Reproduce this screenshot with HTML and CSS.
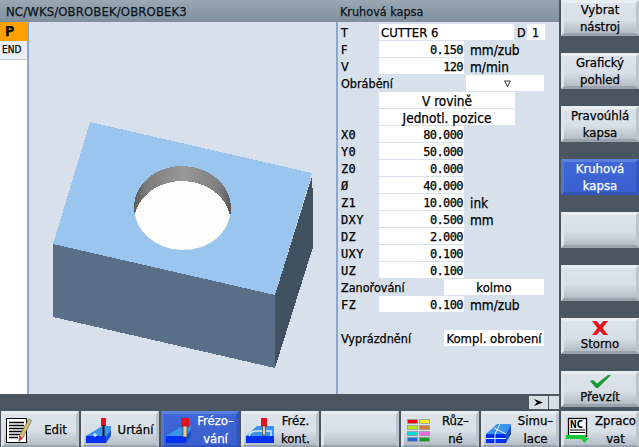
FILE: index.html
```
<!DOCTYPE html>
<html lang="cs">
<head>
<meta charset="utf-8">
<title>Kruhová kapsa</title>
<link rel="stylesheet" href="styles.css">
</head>
<body>
<div class="screen">
  <div class="upper">
    <div class="workspace">
      <header class="titlebar">
        <div class="title-path">NC/WKS/OBROBEK/OBROBEK3</div>
        <div class="title-form">Kruhová kapsa</div>
      </header>
      <div class="panels">
        <aside class="program-list">
          <div class="pl-head">P</div>
          <div class="pl-end">END</div>
        </aside>
        <main class="graphic">
          <svg class="part" viewBox="29 22 307 372" width="307" height="372">
            <defs>
              <linearGradient id="wall" x1="0" x2="1" y1="0" y2="0">
                <stop offset="0" stop-color="#5c5c5c"/>
                <stop offset="0.12" stop-color="#7c7c7c"/>
                <stop offset="0.5" stop-color="#999997"/>
                <stop offset="0.88" stop-color="#7c7c7c"/>
                <stop offset="1" stop-color="#585858"/>
              </linearGradient>
              <clipPath id="opening">
                <ellipse cx="182.5" cy="208" rx="48.5" ry="42" transform="rotate(2 182.5 208)"/>
              </clipPath>
            </defs>
            <polygon points="90,122 312,173 275,295 53,244" fill="#9ac5ef"/>
            <polygon points="53,244 275,295 275,368 53,317" fill="#5a6f87"/>
            <polygon points="275,295 312,176 313,199 313,247 275,368" fill="#415162"/>
            <ellipse cx="182.5" cy="208" rx="48.5" ry="42" transform="rotate(2 182.5 208)" fill="url(#wall)"/>
            <g clip-path="url(#opening)">
              <ellipse cx="182.5" cy="223" rx="48.5" ry="42" transform="rotate(2 182.5 223)" fill="#fdfdfb"/>
            </g>
          </svg>
        </main>
        <section class="form">
          <div class="row"><span class="lbl">T</span><span class="fld fld-tool">CUTTER 6</span><span class="lbl-d">D</span><span class="fld fld-d">1</span></div>
          <div class="row"><span class="lbl">F</span><span class="fld num">0.150</span><span class="unit">mm/zub</span></div>
          <div class="row"><span class="lbl">V</span><span class="fld num">120</span><span class="unit">m/min</span></div>
          <div class="row"><span class="lbl lbl-wide">Obrábění</span><span class="fld fld-combo"><svg class="tri" viewBox="0 0 7 7" width="7" height="7"><path d="M.5 1h6L3.5 6.5z" fill="none" stroke="#333" stroke-width="1"/></svg></span></div>
          <div class="row"><span class="lbl"></span><span class="fld fld-center">V rovině</span></div>
          <div class="row"><span class="lbl"></span><span class="fld fld-center">Jednotl. pozice</span></div>
          <div class="row"><span class="lbl mono">X0</span><span class="fld num">80.000</span></div>
          <div class="row"><span class="lbl mono">Y0</span><span class="fld num">50.000</span></div>
          <div class="row"><span class="lbl mono">Z0</span><span class="fld num">0.000</span></div>
          <div class="row"><span class="lbl mono">Ø</span><span class="fld num">40.000</span></div>
          <div class="row"><span class="lbl mono">Z1</span><span class="fld num">10.000</span><span class="unit">ink</span></div>
          <div class="row"><span class="lbl mono">DXY</span><span class="fld num">0.500</span><span class="unit">mm</span></div>
          <div class="row"><span class="lbl mono">DZ</span><span class="fld num">2.000</span></div>
          <div class="row"><span class="lbl mono">UXY</span><span class="fld num">0.100</span></div>
          <div class="row"><span class="lbl mono">UZ</span><span class="fld num">0.100</span></div>
          <div class="row"><span class="lbl lbl-mid">Zanořování</span><span class="fld fld-opt">kolmo</span></div>
          <div class="row"><span class="lbl mono">FZ</span><span class="fld num">0.100</span><span class="unit">mm/zub</span></div>
          <div class="row"></div>
          <div class="row"><span class="lbl lbl-mid">Vyprázdnění</span><span class="fld fld-opt">Kompl. obrobení</span></div>
        </section>
      </div>
      <div class="scrollbar">
        <button class="more">
          <svg viewBox="0 0 9 7" width="9" height="7"><path d="M0 0l9 3.500L0 7l3-3.500z" fill="#000"/></svg>
        </button>
        <span class="more-box"></span>
      </div>
    </div>
    <nav class="vkeys">
      <div class="key vkey">Vybrat<br>nástroj</div>
      <div class="key vkey">Grafický<br>pohled</div>
      <div class="key vkey">Pravoúhlá<br>kapsa</div>
      <div class="key vkey key-on">Kruhová<br>kapsa</div>
      <div class="key vkey"></div>
      <div class="key vkey"></div>
      <div class="key vkey key-icon">
        <svg viewBox="0 0 16 14" width="16" height="14"><path d="M0 0h4.500L8 4 11.500 0H16l-5.500 7L16 14h-4.500L8 10 4.500 14H0l5.500-7z" fill="#e8101c"/></svg>
        <span>Storno</span>
      </div>
      <div class="key vkey key-icon">
        <svg viewBox="0 0 21 13" width="21" height="13"><path d="M0 6l3-1 4 3.500L18 0h3L8 13H6z" fill="#1a9a34"/></svg>
        <span>Převzít</span>
      </div>
    </nav>
  </div>
  <footer class="hkeys">
    <div class="key hkey">
      <svg class="hicon" viewBox="0 0 30 30" width="30" height="30">
        <rect x="2.500" y="3.500" width="20" height="24" fill="#fff" stroke="#000"/>
        <path d="M5 7.500h15M5 10.500h15M5 13.500h15M5 16.500h14M5 19.500h11M5 22.500h9" stroke="#000" stroke-width="1.300"/>
        <path d="M25 4l2.500 1.500-8.500 17-4 4 .5-6z" fill="#d8c070" stroke="#555" stroke-width=".6"/>
        <path d="M15.500 21l3 2-3.500 3.500z" fill="#e01828"/>
      </svg>
      <span class="hlabel">Edit</span>
    </div>
    <div class="key hkey">
      <svg class="hicon" viewBox="0 0 30 30" width="30" height="30">
        <path d="M2 21L18 11h9v4l-5 6z" fill="#3a94ec"/>
        <rect x="2" y="21" width="20" height="7" fill="#0030f0"/>
        <path d="M22 21l5-6v6l-5 7z" fill="#1a52c8"/>
        <rect x="17" y="3" width="5" height="8" fill="#e8101c"/>
        <rect x="18.500" y="10" width="2" height="11" fill="#111"/>
        <path d="M9 20h4M11 18v4" stroke="#fff"/>
      </svg>
      <span class="hlabel">Urtání</span>
    </div>
    <div class="key hkey key-on">
      <svg class="hicon" viewBox="0 0 30 30" width="30" height="30">
        <path d="M2 21L18 11h9v4l-5 6z" fill="#3a94ec"/>
        <rect x="2" y="21" width="20" height="7" fill="#0030f0"/>
        <path d="M22 21l5-6v6l-5 7z" fill="#1a52c8"/>
        <rect x="17" y="3" width="8" height="9" fill="#e8101c"/>
        <rect x="19" y="11" width="4" height="11" fill="#d8d0b0" stroke="#333" stroke-width=".6"/>
      </svg>
      <span class="hlabel">Frézo–<br>vání</span>
    </div>
    <div class="key hkey">
      <svg class="hicon" viewBox="0 0 30 30" width="30" height="30">
        <path d="M2 21L13 11h18v10z" fill="#3a94ec"/>
        <rect x="2" y="21" width="29" height="7" fill="#0030f0"/>
        <path d="M5 21q1-5 8-5h14v5" fill="none" stroke="#dbe6f0" stroke-width="1.500"/>
        <rect x="17" y="3" width="6" height="9" fill="#e8101c"/>
        <rect x="18.500" y="11" width="3" height="9" fill="#d8d0b0" stroke="#333" stroke-width=".6"/>
      </svg>
      <span class="hlabel">Fréz.<br>kont.</span>
    </div>
    <div class="key hkey"></div>
    <div class="key hkey">
      <svg class="hicon" viewBox="0 0 30 30" width="30" height="30">
        <g stroke="#999" stroke-width=".8">
          <rect x="3.500" y="4.500" width="10" height="4" fill="#f00010"/>
          <rect x="15.500" y="4.500" width="10" height="4" fill="#f8f018"/>
          <rect x="3.500" y="10.500" width="10" height="4" fill="#b8e818"/>
          <rect x="15.500" y="10.500" width="10" height="4" fill="#d88038"/>
          <rect x="3.500" y="16.500" width="10" height="4" fill="#10d8e0"/>
          <rect x="15.500" y="16.500" width="10" height="4" fill="#f868e0"/>
          <rect x="3.500" y="22.500" width="10" height="4" fill="#2068e0"/>
          <rect x="15.500" y="22.500" width="10" height="4" fill="#10a020"/>
        </g>
      </svg>
      <span class="hlabel">Růz–<br>né</span>
    </div>
    <div class="key hkey">
      <svg class="hicon" viewBox="0 0 30 30" width="30" height="30">
        <path d="M2 19L13 9h14l-5 10z" fill="#3a94ec"/>
        <rect x="2" y="19" width="20" height="9" fill="#0030f0"/>
        <path d="M22 19l5-10v10l-5 9z" fill="#1a52c8"/>
        <path d="M2 23.500h20M11 19v9M10 13l12 6M16 9l-5 10" stroke="#fff" stroke-width=".9"/>
      </svg>
      <span class="hlabel">Simu–<br>lace</span>
    </div>
    <div class="key hkey">
      <svg class="hicon" viewBox="0 0 30 30" width="30" height="30">
        <rect x="4.500" y="3.500" width="18" height="18" fill="#fff" stroke="#000" stroke-width="1.300"/>
        <text x="6" y="13" class="nc-text">NC</text>
        <path d="M6 15h15M6 17.500h15" stroke="#000" stroke-width="1.200"/>
        <path d="M2 20h18v4H2z" fill="#18c838"/>
        <path d="M22 20v3h3l-4.500 5-4.500-5h3v-3z" fill="#18c838"/>
      </svg>
      <span class="hlabel">Zpraco<br>vat</span>
    </div>
  </footer>
</div>
</body>
</html>
```
FILE: styles.css
```
* { box-sizing: border-box; }
html, body { margin: 0; padding: 0; }
body { background: #4c5660; overflow: hidden; }
.screen {
  width: 639px; height: 447px;
  display: flex; flex-direction: column;
  background: #4c5660;
  font-family: "DejaVu Sans Condensed", "DejaVu Sans", sans-serif;
  font-size: 12.5px; color: #000;
  -webkit-text-stroke: 0.25px currentColor;
}
.upper { display: flex; height: 411px; }
.workspace { width: 559px; display: flex; flex-direction: column; }
.titlebar {
  height: 22px; display: flex; align-items: center; padding-top: 1px;
  background: linear-gradient(#9aa8b4, #7f8e9b);
  color: #0a1420; font-size: 13px;
}
.title-path { width: 340px; padding-left: 6px; letter-spacing: 0.12px; }
.title-form { flex: 1; font-size: 12.5px; }
.panels { display: flex; height: 372px; }
.program-list { width: 27px; background: #fff; font-size: 10px; }
.pl-head {
  height: 19px; background: #ffa000; padding-left: 5px;
  font-weight: bold; font-size: 14px; line-height: 18px;
}
.pl-end {
  height: 19px; background: #ecf0f5; border-bottom: 1px solid #c4cad0;
  padding-left: 2px; line-height: 18px;
}
.graphic { width: 309px; background: #d8e1eb; border-left: 2px solid #8ba7cf; }
.part { display: block; shape-rendering: crispEdges; }
.form { width: 223px; background: #d8e1eb; border-left: 2px solid #8ba7cf; padding: 2px 0 0 3px; }
.row { display: flex; align-items: flex-start; height: 16px; margin-bottom: 1px; line-height: 18px; white-space: nowrap; }
.lbl { width: 38px; }
.lbl-wide { width: 125px; }
.lbl-mid { width: 103px; }
.mono { font-family: "DejaVu Sans Mono", monospace; font-size: 12px; letter-spacing: 0.4px; }
.fld { height: 16px; background: #fff; display: block; }
.num {
  width: 85px; text-align: right; padding-right: 1px;
  font-family: "DejaVu Sans Mono", monospace; font-size: 12px; letter-spacing: -0.6px;
}
.fld-tool { width: 135px; padding-left: 2px; font-size: 13px; }
.lbl-d { width: 12px; margin-left: 1px; padding-left: 2px; }
.fld-d { width: 18px; padding-left: 5px; }
.fld-combo { width: 78px; display: flex; align-items: center; justify-content: center; padding-left: 4px; }
.fld-center { width: 136px; text-align: center; font-size: 13.5px; }
.fld-opt { width: 100px; text-align: center; font-size: 13px; }
.unit { margin-left: 6px; font-size: 13.5px; }
.scrollbar { height: 17px; display: flex; justify-content: flex-end; align-items: flex-start; padding-top: 2px; gap: 1px; }
.more {
  width: 19px; height: 13px; padding: 0; border: 0;
  background: #d6dee6; display: flex; align-items: center; justify-content: center;
}
.more-box { width: 10px; height: 13px; background: #d6dee6; }
.vkeys { width: 80px; padding-left: 2px; display: flex; flex-direction: column; gap: 17px; }
.key {
  border-style: solid;
  border-color: #e8edf2 #bcc5ce #98a3ad #dfe5eb;
  background: linear-gradient(#dce3ea 0%, #d8dfe6 55%, #b4bdc6 100%);
  color: #000;
}
.key-on {
  border-color: #5c80de #3358c4 #3054bc #5276d8;
  background: linear-gradient(#3f66d6, #3a60d0);
  color: #fff;
}
.vkey {
  height: 36px; border-width: 3px;
  display: flex; flex-direction: column; justify-content: center; align-items: center;
  text-align: center; line-height: 17px; font-size: 13px;
}
.key-icon { justify-content: flex-end; line-height: 15px; }
.key-icon svg { display: block; margin-bottom: 1px; }
.hkeys { display: flex; gap: 2px; height: 36px; padding-left: 1px; }
.hkey {
  width: 78px; height: 36px; border-width: 3px 3px 2px 3px;
  display: flex; align-items: center; font-size: 13px; line-height: 18px;
}
.hicon { width: 30px; height: 30px; flex: none; }
.hlabel { flex: 1; text-align: center; margin-left: 1px; }
.nc-text { font: bold 11px "DejaVu Sans Mono", monospace; }
```
